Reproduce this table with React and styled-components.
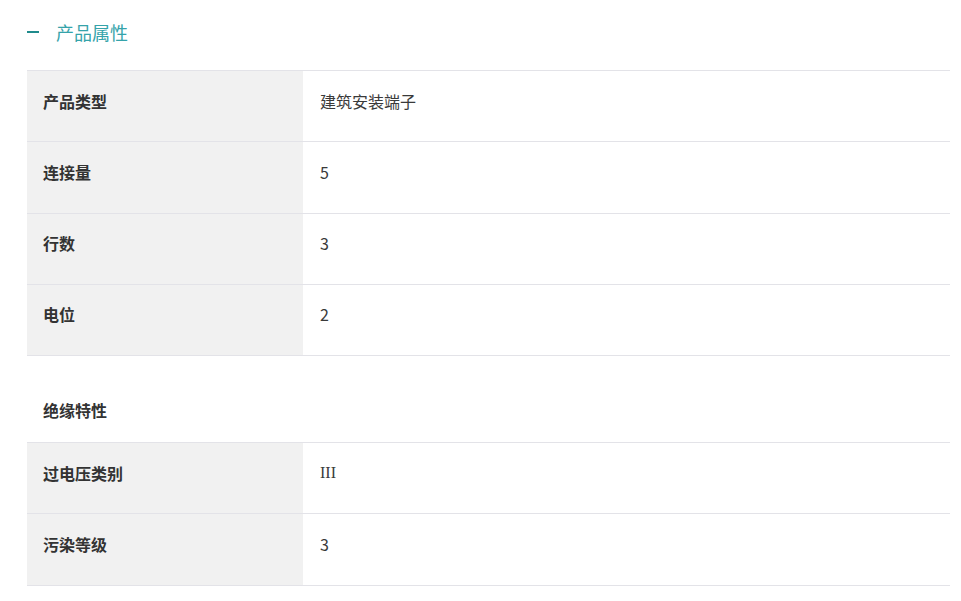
import React from 'react';
import styled, { createGlobalStyle } from 'styled-components';

const GlobalStyle = createGlobalStyle`
  body {
    margin: 0;
    background: #fff;
    font-family: "Noto Sans CJK SC", "Noto Sans", sans-serif;
    color: #333;
  }
`;

const Page = styled.div`
  width: 923px;
  padding: 19px 0 0 27px;
`;

const Title = styled.div`
  display: flex;
  align-items: center;
  height: 26px;
  gap: 17px;
  font-size: 18px;
  color: #35a3aa;
`;

const Dash = styled.span`
  width: 12px;
  height: 2px;
  background: #1f8b8c;
`;

const Table = styled.div`
  margin-top: ${(p) => p.top}px;
  border-top: 1px solid #e3e3e8;
`;

const Row = styled.div`
  display: grid;
  grid-template-columns: 276px 1fr;
  height: 70.25px;
  border-bottom: 1px solid #e3e3e8;
`;

const Cell = styled.div`
  display: flex;
  align-items: center;
  padding: 0 0 11px ${(p) => (p.label ? 16 : 17)}px;
  background: ${(p) => (p.label ? '#f1f1f1' : '#fff')};
  font-size: 16px;
  font-weight: ${(p) => (p.label ? 700 : 400)};
  color: ${(p) => (p.label ? '#333' : '#3a3a3a')};
  font-family: ${(p) =>
    p.serif ? '"Liberation Serif", serif' : '"Noto Sans CJK SC", "Noto Sans", sans-serif'};
`;

const Section = styled.div`
  margin-top: 42px;
  padding-left: 16px;
  font-size: 16px;
  font-weight: 700;
  color: #333;
`;

const basic = [
  ['产品类型', '建筑安装端子'],
  ['连接量', '5'],
  ['行数', '3'],
  ['电位', '2'],
];

const insulation = [
  ['过电压类别', 'III', true],
  ['污染等级', '3'],
];

const Rows = ({ items }) =>
  items.map(([k, v, serif]) => (
    <Row key={k}>
      <Cell label>{k}</Cell>
      <Cell serif={serif}>{v}</Cell>
    </Row>
  ));

export default function App() {
  return (
    <Page>
      <GlobalStyle />
      <Title>
        <Dash />
        产品属性
      </Title>
      <Table top={25}>
        <Rows items={basic} />
      </Table>
      <Section>绝缘特性</Section>
      <Table top={20}>
        <Rows items={insulation} />
      </Table>
    </Page>
  );
}
